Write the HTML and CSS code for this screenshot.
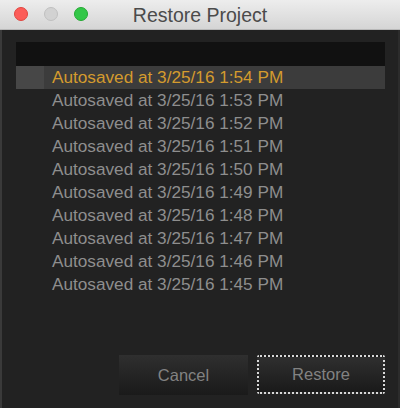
FILE: index.html
```html
<!DOCTYPE html>
<html>
<head>
<meta charset="utf-8">
<link rel="stylesheet" href="styles.css">
</head>
<body>
<div class="window">
  <div class="titlebar">
    <div class="lights">
      <span class="light red"></span>
      <span class="light gray"></span>
      <span class="light green"></span>
    </div>
    <div class="title">Restore Project</div>
  </div>
  <div class="content">
    <div class="list">
      <div class="list-header"></div>
      <div class="row selected"><span class="cell"></span><span class="label">Autosaved at 3/25/16 1:54 PM</span></div>
      <div class="row"><span class="cell"></span><span class="label">Autosaved at 3/25/16 1:53 PM</span></div>
      <div class="row"><span class="cell"></span><span class="label">Autosaved at 3/25/16 1:52 PM</span></div>
      <div class="row"><span class="cell"></span><span class="label">Autosaved at 3/25/16 1:51 PM</span></div>
      <div class="row"><span class="cell"></span><span class="label">Autosaved at 3/25/16 1:50 PM</span></div>
      <div class="row"><span class="cell"></span><span class="label">Autosaved at 3/25/16 1:49 PM</span></div>
      <div class="row"><span class="cell"></span><span class="label">Autosaved at 3/25/16 1:48 PM</span></div>
      <div class="row"><span class="cell"></span><span class="label">Autosaved at 3/25/16 1:47 PM</span></div>
      <div class="row"><span class="cell"></span><span class="label">Autosaved at 3/25/16 1:46 PM</span></div>
      <div class="row"><span class="cell"></span><span class="label">Autosaved at 3/25/16 1:45 PM</span></div>
    </div>
    <div class="buttons">
      <button class="btn cancel">Cancel</button>
      <button class="btn restore">Restore</button>
    </div>
  </div>
</div>
</body>
</html>
```
FILE: styles.css
```css
* { box-sizing: border-box; }
html, body {
  margin: 0;
  padding: 0;
  background: #222222;
}
.window {
  width: 400px;
  height: 408px;
  display: flex;
  flex-direction: column;
  background: #222222;
  border-left: 2px solid #3a3a3a;
  border-right: 2px solid #2c2c2c;
  font-family: "Liberation Sans", Arial, sans-serif;
}
.titlebar {
  height: 30px;
  flex: none;
  position: relative;
  display: flex;
  align-items: center;
  justify-content: center;
  background: linear-gradient(#ededed, #d5d5d5);
  border-bottom: 1px solid #b8b8b8;
  margin: 0 -2px;
}
.lights {
  position: absolute;
  left: 14px;
  top: 7px;
  display: flex;
  gap: 16px;
}
.light {
  width: 14px;
  height: 14px;
  border-radius: 50%;
  display: block;
}
.light.red { background: #fc5c58; border: 1px solid #e0463f; }
.light.gray { background: #d2d2d2; border: 1px solid #c0c0c0; }
.light.green { background: #33c748; border: 1px solid #25a933; }
.title {
  font-size: 19.5px;
  color: #4b4b4b;
  line-height: 30px;
}
.content {
  flex: 1;
  display: flex;
  flex-direction: column;
  padding: 12px 13px 13px 14px;
}
.list {
  width: 369px;
}
.list-header {
  height: 24px;
  background: #111111;
}
.row {
  height: 23px;
  display: flex;
  align-items: stretch;
}
.cell {
  width: 28px;
  flex: none;
}
.label {
  padding-left: 8px;
  font-size: 17.2px;
  line-height: 23px;
  color: #8e8e8e;
  white-space: nowrap;
}
.row.selected {
  background: #3c3c3c;
}
.row.selected .cell {
  background: #474747;
}
.row.selected .label {
  color: #d49b2e;
}
.buttons {
  margin-top: auto;
  display: flex;
  justify-content: flex-end;
  gap: 9px;
}
.btn {
  font-family: "Liberation Sans", Arial, sans-serif;
  font-size: 16.5px;
  color: #828282;
  background: linear-gradient(#2f2f2f, #1a1a1a);
  border: none;
  height: 40px;
  padding: 0;
  margin: 0;
}
.btn.cancel {
  width: 129px;
}
.btn.restore {
  width: 128px;
  height: 39px;
  border: 2px dotted #d8d8d8;
  border-radius: 2px;
}
```
